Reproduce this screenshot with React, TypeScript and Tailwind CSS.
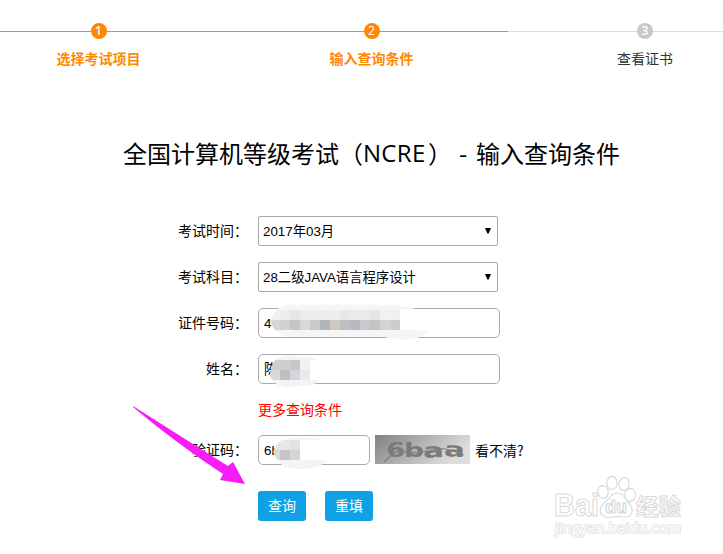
import React from "react";

const yahei = "font-['Noto_Sans_CJK_SC',sans-serif]";
const arial = "font-['Liberation_Sans','Noto_Sans_CJK_SC',sans-serif]";

function Step({ n, label, active, width }: { n: number; label: string; active: boolean; width: string }) {
  return (
    <div className={`flex shrink-0 flex-col items-center ${width}`}>
      <div className={`flex h-4 w-4 items-center justify-center rounded-full font-['Open_Sans'] text-xs leading-4 text-white ${active ? "bg-[#ff8800]" : "bg-[#c8c8c8]"} ${n === 2 ? "" : "font-semibold"}`}>
        {n}
      </div>
      <div className={`mt-[9px] text-sm leading-5 whitespace-nowrap ${active ? "font-bold text-[#ff8800]" : "text-[#333]"}`}>{label}</div>
    </div>
  );
}

function Row({ label, children }: { label: string; children: React.ReactNode }) {
  return (
    <div className="flex h-[30px] items-center">
      <div className="mr-[10px] mb-0.5 w-[248px] shrink-0 text-right text-sm leading-5">{label}</div>
      {children}
    </div>
  );
}

function Select({ value }: { value: string }) {
  return (
    <div className={`flex h-[30px] w-[240px] items-center justify-between rounded-[2px] border border-[#a9a9a9] pt-0.5 pr-[5px] pl-1 text-[13.333px] leading-5 whitespace-nowrap ${arial}`}>
      <span>{value}</span>
      <svg width="8" height="7" viewBox="0 0 8 7" className="mb-[3px]"><path d="M1 1h6L4.600 6.500H3.400z" /></svg>
    </div>
  );
}

function Input({ value, width }: { value: string; width: string }) {
  return (
    <div className={`flex h-[30px] items-center overflow-hidden rounded-[5px] border border-[#a9a9a9] pt-px pl-[5px] text-[13.333px] leading-5 ${arial} ${width}`}>{value}</div>
  );
}

const idTop = ["#efefef", "#ededee", "#e6e6e6", "#ececf0", "#f0eeec", "#ececeb", "#efeeed", "#e6e7e7", "#eaeaeb", "#e9eae9", "#e7e6e5", "#f0f2f1", "#f0f0ef"];
const idBottom = ["#d6d6d6", "#d0d2d1", "#c4c5c4", "#d6d9d7", "#cccac9", "#b3b6b5", "#cec8c1", "#bcbfc5", "#bbb8c2", "#cac8ca", "#c3c4c5", "#d2d5d4", "#cdcdcd"];

function Tiles({ colors, x, y }: { colors: string[]; x: number; y: number }) {
  return <>{colors.map((c, i) => <rect key={i} x={x + i * 10} y={y} width="10" height="10" fill={c} shapeRendering="crispEdges" />)}</>;
}

function Overlays() {
  return (
    <svg className="pointer-events-none absolute top-0 left-0" width="723" height="554" viewBox="0 0 723 554">
      <defs>
        <clipPath id="id-mask"><path d="M286 305Q340 304 397 305L416 309H400V330H429Q423 337 414 339Q399 341 384 337H290Q273 335 271 321Q273 309 286 305Z" /></clipPath>
        <clipPath id="name-mask"><path d="M276 359Q287 353 297 357Q308 354 317 360H310V380H319Q315 386 304 386Q294 385 287 388Q277 387 271 378Q269 368 276 359Z" /></clipPath>
        <clipPath id="code-mask"><path d="M283 440Q298 435 324 440H300V460H328Q318 470 300 469Q282 469 279 461Q270 453 276 446Q279 441 283 440Z" /></clipPath>
      </defs>
      <g clipPath="url(#id-mask)">
        <rect x="270" y="300" width="165" height="45" fill="#f5f5f5" />
        <Tiles colors={idTop} x={270} y={310} />
        <Tiles colors={idBottom} x={270} y={320} />
      </g>
      <g clipPath="url(#name-mask)">
        <rect x="268" y="350" width="55" height="40" fill="#f3f3f3" />
        <Tiles colors={["#cdced0", "#cecfd1", "#c9c6c8", "#f0f2f4"]} x={270} y={360} />
        <Tiles colors={["#dbd9d5", "#bdc0c1", "#d9d5dc", "#e9e9ed"]} x={270} y={370} />
      </g>
      <g clipPath="url(#code-mask)">
        <rect x="270" y="430" width="65" height="45" fill="#f4f4f4" />
        <Tiles colors={["#e3e5e3", "#e7e7e7", "#e2e3e6"]} x={270} y={440} />
        <Tiles colors={["#d8dad8", "#c5c5c8", "#d4d6d5"]} x={270} y={450} />
      </g>
      <path d="M133 406L223 463L228 466L233 462L245 484L220 480L223 474Q177 444 133 407Z" fill="#f81cf8" />
    </svg>
  );
}

function Captcha() {
  return (
    <svg className="mb-px ml-[5px]" width="95" height="29" viewBox="0 0 95 29">
      <defs>
        <linearGradient id="captcha-bg" x1="0" y1="0" x2="1" y2="0.35"><stop stopColor="#828282" /><stop offset="1" stopColor="#dedede" /></linearGradient>
      </defs>
      <rect width="95" height="29" fill="url(#captcha-bg)" />
      <g fill="#7a7a7a" fontFamily="DejaVu Sans" fontWeight="bold" fontSize="20">
        <text x="11" y="22" textLength="19" lengthAdjust="spacingAndGlyphs" transform="rotate(-3 18 15)">6</text>
        <text x="29" y="22" textLength="20" lengthAdjust="spacingAndGlyphs">b</text>
        <text x="48" y="22.500" textLength="21" lengthAdjust="spacingAndGlyphs" transform="rotate(-2 57 17)">a</text>
        <text x="69" y="21.500" textLength="21" lengthAdjust="spacingAndGlyphs" transform="rotate(3 78 17)">a</text>
      </g>
      <path d="M9 27L19 18Q24 15 32 17T52 16T70 14T89 20" fill="none" stroke="#7e7e7e" strokeWidth="1.2" />
    </svg>
  );
}

function Watermark() {
  return (
    <svg className="pointer-events-none absolute top-[470px] left-[548px]" width="140" height="75" viewBox="0 0 140 75">
      <g fill="#fff" stroke="#d9d9d9" strokeWidth="1" fontWeight="bold">
        <text x="6" y="46" fontSize="31" textLength="45" lengthAdjust="spacingAndGlyphs" fontFamily="Liberation Sans">Bai</text>
        <text x="88" y="44.500" fontSize="23" textLength="45" lengthAdjust="spacingAndGlyphs" fontFamily="Noto Sans CJK SC">经验</text>
      </g>
      <g fill="#fff" stroke="#dadada" strokeWidth="1.2">
        <ellipse cx="55" cy="22" rx="5.2" ry="6.5" transform="rotate(-10 55 22)" />
        <ellipse cx="64" cy="13" rx="5.2" ry="6.7" />
        <ellipse cx="76" cy="14" rx="5" ry="6.5" transform="rotate(12 76 14)" />
        <ellipse cx="82" cy="25" rx="5.4" ry="6.5" transform="rotate(12 82 25)" />
        <path d="M69 23C76 23 77 29 81 33C87 40 84 47 77 47C72 47 70 46 65 47C56 49 50 44 53 37C55 32 60 31 63 26Q65 23 69 23Z" />
      </g>
      <text x="57" y="43" fontSize="19" textLength="22" lengthAdjust="spacingAndGlyphs" fill="#fff" stroke="#d4d4d4" strokeWidth="1" fontFamily="Liberation Sans" fontWeight="bold">du</text>
      <text x="7" y="63" fontSize="14" textLength="126" lengthAdjust="spacingAndGlyphs" fill="#fff" stroke="#e0e0e0" strokeWidth="1.6" paintOrder="stroke" fontFamily="Open Sans">jingyan.baidu.com</text>
    </svg>
  );
}

export default function App() {
  return (
    <main className={`relative h-[554px] w-[723px] overflow-hidden bg-white text-black ${yahei}`}>
      <header className="flex h-[70px] bg-[linear-gradient(to_right,#ff8800_508px,#dcdcdc_508px)] bg-[length:723px_1px] bg-[position:0_31px] bg-no-repeat pt-[23px]">
        <Step n={1} label="选择考试项目" active width="w-[197px]" />
        <Step n={2} label="输入查询条件" active width="w-[349px]" />
        <Step n={3} label="查看证书" active={false} width="w-[198px]" />
      </header>
      <h1 className="mt-[65px] flex h-9 w-full items-center pl-[123px] text-2xl whitespace-nowrap">
        <span className="w-[240px]">全国计算机等级考试（</span>
        <span className="w-[65px] font-['Open_Sans'] text-2xl tracking-[0.3px]">NCRE</span>
        <span className="w-[31px]">）</span>
        <span className="w-[17px]">-</span>
        <span>输入查询条件</span>
      </h1>
      <form className="mt-[45px] flex flex-col gap-4" onSubmit={(e) => e.preventDefault()}>
        <Row label="考试时间："><Select value="2017年03月" /></Row>
        <Row label="考试科目："><Select value="28二级JAVA语言程序设计" /></Row>
        <Row label="证件号码："><Input value="4" width="w-[242px]" /></Row>
        <Row label="姓名："><Input value="陈" width="w-[242px]" /></Row>
        <div className="-mt-px ml-[258px] h-5 text-sm leading-5 text-[#ff0000]">更多查询条件</div>
        <Row label="验证码：">
          <Input value="6b" width="w-[112px]" />
          <Captcha />
          <span className="mb-px ml-[5px] text-sm leading-5">看不清?</span>
        </Row>
        <div className="mt-[10px] ml-[258px] flex gap-[19px]">
          <button className="h-[30px] w-12 rounded-[3px] bg-[#10a0e4] pb-0.5 text-sm leading-5 text-white">查询</button>
          <button className="h-[30px] w-12 rounded-[3px] bg-[#10a0e4] pb-0.5 text-sm leading-5 text-white">重填</button>
        </div>
      </form>
      <Overlays />
      <Watermark />
    </main>
  );
}
